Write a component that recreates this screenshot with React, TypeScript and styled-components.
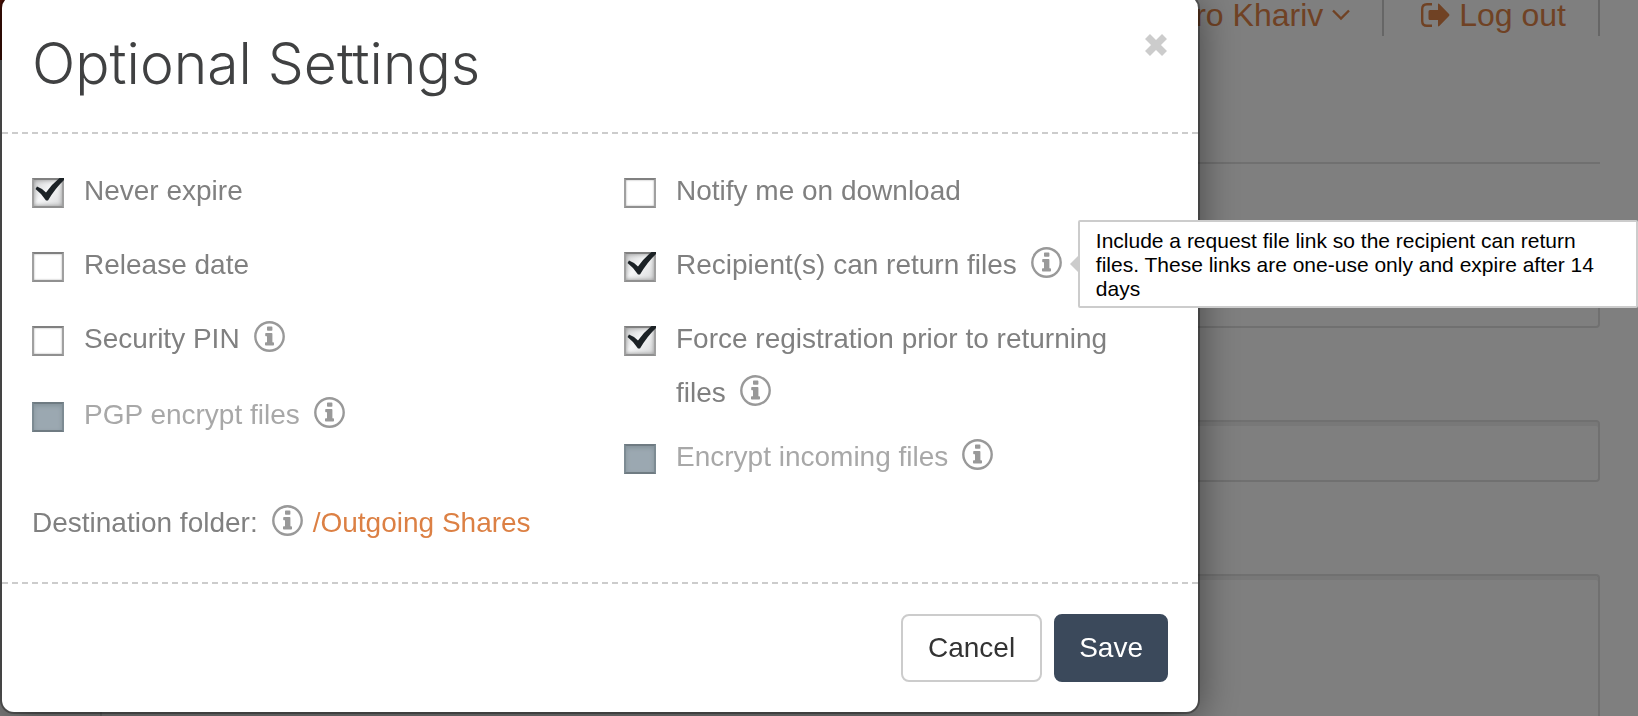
import React, { useId } from "react";
import styled, { createGlobalStyle, css } from "styled-components";

const GlobalStyle = createGlobalStyle`
  *, *::before, *::after { box-sizing: border-box; }
  body {
    margin: 0;
    background: #fff;
    color: #808080;
    font-family: "Liberation Sans", Arial, sans-serif;
    font-size: 28px;
  }
`;

/* Page behind the dialog */

const Page = styled.div`
  display: flex;
  flex-direction: column;
  height: 100vh;
  overflow: hidden;
`;

const PageHeader = styled.header`
  display: flex;
  flex: none;
  justify-content: space-between;
  height: 60px;
  padding-right: 38px;
`;

const Brand = styled.div`
  width: 320px;
  background: #a3260f;
`;

const UserNav = styled.nav`
  display: flex;
  align-items: flex-start;
`;

const NavLink = styled.a`
  display: flex;
  align-items: center;
  gap: 9px;
  height: 36px;
  padding: 0 32px 6px 37px;
  border-right: 2px solid #ccc;
  color: #e08448;
  font-size: 32px;
  line-height: 30px;
  text-decoration: none;
  white-space: nowrap;
`;

const Form = styled.form`
  display: flex;
  flex: 1;
  flex-direction: column;
  gap: 92px;
  min-height: 0;
  margin: 102px 38px 0 100px;
  padding-top: 102px;
  border-top: 2px solid #e0e0e0;
`;

const field = css`
  flex: none;
  width: 100%;
  border: 2px solid #e0e0e0;
  border-radius: 4px;
  background: #fff;
  box-shadow: inset 0 4px 0 #f0f0f0;
`;

const TextInput = styled.input`
  ${field}
  height: 62px;
`;

const Message = styled.textarea`
  ${field}
  flex: 1;
  min-height: 0;
  border-bottom: 0;
  border-radius: 4px 4px 0 0;
  resize: none;
`;

const Backdrop = styled.div`
  position: fixed;
  inset: 0;
  background: rgba(0, 0, 0, 0.5);
`;

/* Dialog */

const Dialog = styled.section`
  position: fixed;
  top: -4px;
  left: 2px;
  width: min(1196px, calc(100vw - 4px));
  border-radius: 12px;
  background: #fff;
  box-shadow: 0 0 0 2px rgba(0, 0, 0, 0.3), 0 6px 40px rgba(0, 0, 0, 0.5);
`;

const DialogHeader = styled.header`
  display: flex;
  align-items: flex-start;
  justify-content: space-between;
  padding: 28px 30px 28px;
  border-bottom: 2px dashed #ccc;
`;

const Title = styled.h1`
  margin: 0;
  color: #404142;
  font-family: Inter, "Liberation Sans", sans-serif;
  font-size: 57px;
  font-weight: 300;
  line-height: 80px;
`;

const CloseButton = styled.button`
  display: flex;
  margin-top: 9px;
  padding: 0;
  border: 0;
  background: none;
  color: #ccc;
`;

const Body = styled.div`
  padding: 30px 30px 32px;
`;

const Columns = styled.div`
  display: grid;
  grid-template-columns: 1fr 1fr;
  gap: 48px;
`;

const Column = styled.div`
  display: flex;
  flex-direction: column;
`;

const Option = styled.div<{ $disabled?: boolean; $gap?: number }>`
  display: flex;
  align-items: flex-start;
  gap: 20px;
  margin-bottom: ${(p) => p.$gap ?? 20}px;
  padding-right: 30px;
  color: ${(p) => (p.$disabled ? "#a8a8a8" : "#808080")};
  line-height: 54px;
`;

const Box = styled.span`
  display: grid;
  flex: none;
  width: 32px;
  height: 30px;
  margin-top: 14px;

  > * {
    grid-area: 1 / 1;
  }
`;

const Tick = styled.input`
  appearance: none;
  width: 32px;
  height: 30px;
  margin: 0;
  border: 2px solid;
  border-color: #808080 #a0a0a0 #909090;
  border-radius: 0;
  background: #fff;
  box-shadow: inset 0 0 2px #a0a0a0;

  &:checked {
    background: linear-gradient(135deg, #cfd0d1, #f6f7f8 45%, #d9dadb);
    box-shadow: inset 0 0 4px #909090;
  }

  &:disabled {
    border-color: #6f7b82 #7d8b93;
    background: #9ba8b1;
    box-shadow: inset 0 2px 4px #84929a;
  }
`;

const TickMark = styled.svg`
  display: none;
  pointer-events: none;

  ${Tick}:checked + & {
    display: block;
  }
`;

const InfoButton = styled.button`
  position: relative;
  display: inline-flex;
  margin: 0 0 0 14px;
  padding: 0;
  border: 0;
  background: none;
  color: #999;
  vertical-align: -4px;
`;

const Tooltip = styled.span`
  position: absolute;
  top: -27px;
  left: calc(100% + 16px);
  width: 560px;
  padding: 7px 16px 5px;
  border: 2px solid #ccc;
  border-radius: 2px;
  background: #fff;
  color: #000;
  font-size: 21px;
  line-height: 24px;
  text-align: left;

  &::before {
    content: "";
    position: absolute;
    top: 32px;
    right: 100%;
    border: 10px solid transparent;
    border-right-color: #ccc;
    border-left-width: 0;
  }
`;

const Destination = styled.p`
  display: flex;
  align-items: center;
  gap: 10px;
  margin: 12px 0 0;
  line-height: 54px;
`;

const FolderLink = styled.a`
  color: #dc8044;
  text-decoration: none;
`;

const DialogFooter = styled.footer`
  display: flex;
  justify-content: flex-end;
  gap: 12px;
  padding: 30px;
  border-top: 2px dashed #ccc;
`;

const ActionButton = styled.button<{ $primary?: boolean }>`
  height: 68px;
  padding: 0 ${(p) => (p.$primary ? 23 : 25)}px;
  border: 2px solid ${(p) => (p.$primary ? "#3b495b" : "#ccc")};
  border-radius: 8px;
  background: ${(p) => (p.$primary ? "#3b495b" : "#fff")};
  color: ${(p) => (p.$primary ? "#fff" : "#333")};
  font: inherit;
`;

function InfoIcon() {
  return (
    <svg width="31" height="31" viewBox="0 0 31 31" aria-hidden="true">
      <circle cx="15.5" cy="15.5" r="14.2" fill="none" stroke="currentColor" strokeWidth="2.4" />
      <path
        fill="currentColor"
        d="M13.8 5.4h3.8q.8 0 .8.8v2.8q0 .8-.8.8h-3.800q-.8 0-.8-.8V6.200q0-.8.8-.8ZM12 12h5.600q.8 0 .8.8v8.500h.8q.8 0 .8.8v1.600q0 .8-.8.8h-7.400q-.8 0-.8-.8v-1.600q0-.8.8-.8h1.200v-6.100H12q-.8 0-.8-.8v-1.600q0-.8.8-.8Z"
      />
    </svg>
  );
}

function Info({ label, tip }: { label: string; tip?: string }) {
  return (
    <InfoButton type="button" aria-label={label}>
      <InfoIcon />
      {tip && <Tooltip role="tooltip">{tip}</Tooltip>}
    </InfoButton>
  );
}

type CheckOptionProps = {
  label: string;
  checked?: boolean;
  disabled?: boolean;
  info?: boolean;
  tip?: string;
  gap?: number;
};

function CheckOption({ label, checked, disabled, info, tip, gap }: CheckOptionProps) {
  const id = useId();
  return (
    <Option $disabled={disabled} $gap={gap}>
      <Box>
        <Tick id={id} type="checkbox" defaultChecked={checked} disabled={disabled} />
        <TickMark width="32" height="30" viewBox="0 0 32 30" aria-hidden="true">
          <path d="M3.500 11 5 8.500q4.500 1.500 9 6Q20 6 27.500 0H32v2Q23 10.500 16 22.500h-2Q9.500 15.500 3.500 11Z" fill="#1c2226" />
        </TickMark>
      </Box>
      <span>
        <label htmlFor={id}>{label}</label>
        {info && <Info label={`About ${label}`} tip={tip} />}
      </span>
    </Option>
  );
}

export default function App() {
  return (
    <>
      <GlobalStyle />
      <Page>
        <PageHeader>
          <Brand />
          <UserNav>
            <NavLink href="#account">
              Dnipro Khariv
              <svg width="18" height="12" viewBox="0 0 18 12" aria-hidden="true">
                <path d="m1 1.500 8 8 8-8" fill="none" stroke="currentColor" strokeWidth="2.400" />
              </svg>
            </NavLink>
            <NavLink href="#logout">
              <svg width="29" height="24" viewBox="0 0 29 24" aria-hidden="true">
                <path d="M11 1.200H6Q1.200 1.200 1.200 6v12q0 4.800 4.800 4.800h5" fill="none" stroke="currentColor" strokeWidth="2.400" />
                <path d="M17 1.500q0-1.500 1.300-.5L28 11q1 1 0 2L18.300 23q-1.300 1-1.300-.5V17H9q-1.500 0-1.500-1.500v-7Q7.500 7 9 7h8Z" fill="currentColor" />
              </svg>
              Log out
            </NavLink>
          </UserNav>
        </PageHeader>
        <Form>
          <TextInput aria-label="Recipients" />
          <TextInput aria-label="Subject" />
          <Message aria-label="Message" />
        </Form>
      </Page>
      <Backdrop />
      <Dialog role="dialog" aria-labelledby="dialog-title">
        <DialogHeader>
          <Title id="dialog-title">Optional Settings</Title>
          <CloseButton type="button" aria-label="Close">
            <svg width="24" height="24" viewBox="0 0 24 24" aria-hidden="true">
              <path d="M3.500 3.500l17 17m0-17-17 17" stroke="currentColor" strokeWidth="7" />
            </svg>
          </CloseButton>
        </DialogHeader>
        <Body>
          <Columns>
            <Column>
              <CheckOption label="Never expire" checked />
              <CheckOption label="Release date" />
              <CheckOption label="Security PIN" info gap={22} />
              <CheckOption label="PGP encrypt files" info disabled gap={0} />
            </Column>
            <Column>
              <CheckOption label="Notify me on download" />
              <CheckOption
                label="Recipient(s) can return files"
                checked
                info
                tip="Include a request file link so the recipient can return files. These links are one-use only and expire after 14 days"
              />
              <CheckOption label="Force registration prior to returning files" checked info gap={10} />
              <CheckOption label="Encrypt incoming files" info disabled gap={0} />
            </Column>
          </Columns>
          <Destination>
            <span>
              Destination folder:
              <Info label="About destination folder" />
            </span>
            <FolderLink href="#folder">/Outgoing Shares</FolderLink>
          </Destination>
        </Body>
        <DialogFooter>
          <ActionButton type="button">Cancel</ActionButton>
          <ActionButton type="button" $primary>Save</ActionButton>
        </DialogFooter>
      </Dialog>
    </>
  );
}
